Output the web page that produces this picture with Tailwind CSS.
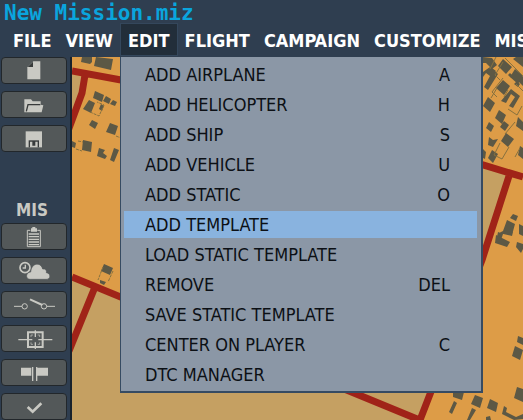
<!DOCTYPE html>
<html lang="en">
<head>
  <meta charset="UTF-8" />
  <meta name="viewport" content="width=device-width, initial-scale=1.0" />
  <title>New Mission.miz</title>
  <script src="https://cdn.jsdelivr.net/npm/@tailwindcss/browser@4"></script>
</head>
<body class="flex h-screen flex-col overflow-hidden bg-[#2f3e50] font-['DejaVu_Sans_Condensed','DejaVu_Sans',sans-serif] text-[18px] [font-stretch:condensed]">
  <header>
    <h1 class="h-[23px] px-1 font-['DejaVu_Sans_Mono',monospace] text-[21px] leading-[26px] font-bold whitespace-nowrap text-[#0aa5dd] [font-stretch:normal]">New Mission.miz</h1>
    <nav class="flex h-[34px] items-start px-1.5 font-bold whitespace-nowrap text-white">
      <button type="button" class="h-[33px] px-[7px] pt-px">FILE</button>
      <button type="button" class="h-[33px] px-[7px] pt-px">VIEW</button>
      <div class="relative">
        <button type="button" aria-expanded="true" class="h-[33px] border border-[#34475c] bg-[#222e3a] px-[7px] pt-px">EDIT</button>
        <!-- Edit menu -->
        <div class="absolute top-[34px] left-0 z-10 flex w-[363px] flex-col gap-[3px] border-r-2 border-b-2 border-l border-[#364b62] bg-[#8b97a6] pt-1 pr-1 pb-[3px] pl-[3px] font-normal text-[#0c1015]">
          <button type="button" class="flex h-[27px] items-center justify-between pr-[27px] pl-[21px]"><span>ADD AIRPLANE</span><span>A</span></button>
          <button type="button" class="flex h-[27px] items-center justify-between pr-[27px] pl-[21px]"><span>ADD HELICOPTER</span><span>H</span></button>
          <button type="button" class="flex h-[27px] items-center justify-between pr-[27px] pl-[21px]"><span>ADD SHIP</span><span>S</span></button>
          <button type="button" class="flex h-[27px] items-center justify-between pr-[27px] pl-[21px]"><span>ADD VEHICLE</span><span>U</span></button>
          <button type="button" class="flex h-[27px] items-center justify-between pr-[27px] pl-[21px]"><span>ADD STATIC</span><span>O</span></button>
          <button type="button" class="flex h-[27px] items-center justify-between bg-[#89b3df] pr-[27px] pl-[21px]"><span>ADD TEMPLATE</span></button>
          <button type="button" class="flex h-[27px] items-center justify-between pr-[27px] pl-[21px]"><span>LOAD STATIC TEMPLATE</span></button>
          <button type="button" class="flex h-[27px] items-center justify-between pr-[27px] pl-[21px]"><span>REMOVE</span><span>DEL</span></button>
          <button type="button" class="flex h-[27px] items-center justify-between pr-[27px] pl-[21px]"><span>SAVE STATIC TEMPLATE</span></button>
          <button type="button" class="flex h-[27px] items-center justify-between pr-[27px] pl-[21px]"><span>CENTER ON PLAYER</span><span>C</span></button>
          <button type="button" class="flex h-[27px] items-center justify-between pr-[27px] pl-[21px]"><span>DTC MANAGER</span></button>
        </div>
      </div>
      <button type="button" class="h-[33px] px-[7px] pt-px">FLIGHT</button>
      <button type="button" class="h-[33px] px-[7px] pt-px">CAMPAIGN</button>
      <button type="button" class="h-[33px] px-[7px] pt-px">CUSTOMIZE</button>
      <button type="button" class="h-[33px] px-[7px] pt-px">MIS</button>
    </nav>
  </header>

  <div class="flex min-h-0 flex-1">
    <!-- Toolbar -->
    <aside class="flex w-[72px] shrink-0 flex-col gap-[7px] border-r-2 border-[#19222c] pr-[3px] pl-px text-[#c9c9c3]">
      <button type="button" aria-label="New" class="h-[27px] shrink-0 rounded-sm border border-[#22272b] bg-[#535859]">
        <svg class="-m-px h-[27px] w-[66px]" viewBox="0 0 198 81" fill="currentColor">
          <path d="M97 13h21v54H79V31z" />
          <path d="M80 30L96 14v16z" fill="#383b3b" />
        </svg>
      </button>
      <button type="button" aria-label="Open" class="h-[27px] shrink-0 rounded-sm border border-[#22272b] bg-[#535859]">
        <svg class="-m-px h-[27px] w-[66px]" viewBox="0 0 198 81" fill="currentColor">
          <path d="M70 25h20l5 6h24v10l8 2-5 21H70z" />
          <path d="M76 61l5-20h37" fill="none" stroke="#383b3b" stroke-width="4" />
        </svg>
      </button>
      <button type="button" aria-label="Save" class="h-[27px] shrink-0 rounded-sm border border-[#22272b] bg-[#535859]">
        <svg class="-m-px h-[27px] w-[66px]" viewBox="0 0 198 81" fill="currentColor">
          <path d="M74 19h49v48H74z" />
          <path d="M83 46h31v21H83z" fill="#383b3b" />
          <path d="M87 50h7v17h-7zM103 50h7v17h-7zM94 62h9v5h-9z" />
        </svg>
      </button>

      <h2 class="mt-10 -mb-[5px] h-[22px] pr-1 text-center text-[17px] leading-[22px] font-bold">MIS</h2>

      <button type="button" aria-label="Briefing" class="h-[27px] shrink-0 rounded-sm border border-[#22272b] bg-[#535859]">
        <svg class="-m-px h-[27px] w-[66px]" viewBox="0 0 198 81" fill="none" stroke="currentColor" stroke-width="3">
          <path d="M88 22h-9v49h39V22h-9" />
          <path d="M90 16h4v-4h9v4h5v10H90z" fill="currentColor" stroke="none" />
          <path d="M83 33h31M83 41h31M83 49h31M83 57h31M83 65h31" stroke-width="4" />
        </svg>
      </button>
      <button type="button" aria-label="Weather and time" class="h-[27px] shrink-0 rounded-sm border border-[#22272b] bg-[#535859]">
        <svg class="-m-px h-[27px] w-[66px]" viewBox="0 0 198 81" fill="currentColor">
          <circle cx="72" cy="32" r="15" fill="none" stroke="currentColor" stroke-width="5" />
          <path d="M73 23v10h-8" fill="none" stroke="currentColor" stroke-width="4" />
          <path d="M88 67c-16 0-14-21 1-22 2-28 31-31 36-9 9-2 13 5 11 11 14 1 14 20 0 20z" stroke="#535859" stroke-width="2" />
        </svg>
      </button>
      <button type="button" aria-label="Triggers" class="h-[27px] shrink-0 rounded-sm border border-[#22272b] bg-[#535859]">
        <svg class="-m-px h-[27px] w-[66px]" viewBox="0 0 198 81" fill="none" stroke="currentColor" stroke-width="3">
          <path d="M39 46h24M137 46h25" />
          <circle cx="71" cy="46" r="8" />
          <circle cx="129" cy="46" r="8" />
          <path d="M87 25l37 17" stroke-width="6" />
        </svg>
      </button>
      <button type="button" aria-label="Goals" class="h-[27px] shrink-0 rounded-sm border border-[#22272b] bg-[#535859]">
        <svg class="-m-px h-[27px] w-[66px]" viewBox="0 0 198 81" fill="none" stroke="currentColor" stroke-width="4">
          <path d="M81 22h44v44H81z" stroke-width="6" />
          <path d="M52 44h42M112 44h42M103 16v20M103 52v20" />
          <path d="M90 36v-6h6M110 30h6v6M116 52v6h-6M96 58h-6v-6" stroke-width="2" />
        </svg>
      </button>
      <button type="button" aria-label="Set of flags" class="h-[27px] shrink-0 rounded-sm border border-[#22272b] bg-[#535859]">
        <svg class="-m-px h-[27px] w-[66px]" viewBox="0 0 198 81" fill="currentColor">
          <path d="M60 26h31v24H60zM109 26h32v24h-32zM93 24h4v42h-4zM105 24h4v42h-4z" />
        </svg>
      </button>
      <button type="button" aria-label="Check" class="h-[27px] shrink-0 rounded-sm border border-[#22272b] bg-[#535859]">
        <svg class="-m-px h-[27px] w-[66px]" viewBox="0 0 198 81" fill="none" stroke="currentColor" stroke-width="8">
          <path d="M80 42l15 14 26-25" />
        </svg>
      </button>
    </aside>

    <!-- Map -->
    <main class="min-w-0 flex-1 bg-[#dd9c47]">
      <svg class="h-full w-full" viewBox="72 57 451 363" preserveAspectRatio="xMinYMin slice">
        <path fill="#c5a062" d="M72 74l14 4-14 50zM483 167l23 8-23 78zM72 278l300 90 60 26-10 26H72z" />
        <g fill="none" stroke="#a02318" stroke-width="7">
          <path d="M72 71l49 9L483 165l40 12M85 75l-3 18-14 38" />
          <path d="M509 176l-27 84L420 420M72 277l350 144M95 287l-26 64" />
        </g>
        <g fill="#5c5845">
          <path d="M82 57h10v5l-2 2-9-2zM96 57l17 2-2 11-17-4zM95 91l9 4-2 7-9-4zM106 96l5 3-2 5-6-3zM113 100l4 2-2 4-5-2zM89 100l6 3-4 10-8-4zM101 104l3 2-2 5-3-2zM92 120l6 3-3 6-6-4zM110 123l8 3-3 9-9-3zM83 140l9 2-1 10-9-2zM72 141l4 2-1 5-3-1zM99 148l6 2-2 3 4 3-2 3-8-3zM114 148l5 2-5 12-4-2z" />
          <path d="M104 264l9 4-3 7-9-4zM100 280l6 2-2 3-4-2z" />
          <path d="M483 57l9 1 5 7-5 4-6-6h-3zM503 59l9 8-6 7-8-8zM516 57h7v10l-10-8zM515 69l8 7-5 8-8-7zM483 72l7-5 8 7-10 16-4-3 6-11-4-3-3 4zM503 80l7 6-6 9-8-7zM511 89l9 7-7 12-4-2 6-9-4-3-5 9-5-2zM519 74l4 3v9l-5-5zM488 97l7 6-5 9-7-6zM499 110l7 5-4 9-7-6zM489 122l5 4-3 6-5-4zM504 121l5 4-4 6-5-4zM518 117l5 5v9l-7-5zM489 137l4 3 5-1-5 8-5-2zM506 133l8 6-6 8-7-6zM492 150l6 4-5 9-5-5zM520 146l3 2v11l-5-4zM483 149l3 3-1 7-2-1zM517 81l3 3-2 3-4-3zM492 68l4 3-2 2-3-3zM510 73l3 3-2 2-3-3z" />
          <path d="M513 214l5 2-2 5-6-3zM507 220l8 4-3 11-9-4zM519 224l4 2v10l-4-2zM498 232l5 2-2 6-4-3zM496 235l14 7-3 5-12-4zM499 233l6-3 8 2-1 4zM517 242l6 2v5l-2 4-5-6zM518 336l5 2v7l-6-3zM515 346l8 4-3 10-8-4zM517 387l6 2v13l-9-4zM475 395l8 3-3 10-9-4zM490 399l8 4-2 9-9-4zM453 392h11l-2 8-9-3zM454 401l3 2-5 11-3-2zM472 408l4 2-6 10h-3zM504 406l3 2-1 4 10 5 7-3v5l-9 1-12-6zM486 417l4-1 1 4h-5z" />
        </g>
        <g fill="none" stroke="#86713f" stroke-width="1">
          <path d="M90 112l9 4 5-11-7-3M78 141l5 1M76 149l6 2M103 267l-5 13M113 271l-5 11M116 136l5 2" stroke-dasharray="3 1" />
          <path d="M496 57l-6 12M505 58l18 18M503 62l-8 13 5 5M497 88l-6 10M504 97l4-7M516 84l7 7M508 109l9 6 5-9M503 78l-11 14 5 5M515 122l-10 12M500 143l-6 12 8 4 7-12M520 148l-5 9" />
        </g>
      </svg>
    </main>
  </div>
</body>
</html>
